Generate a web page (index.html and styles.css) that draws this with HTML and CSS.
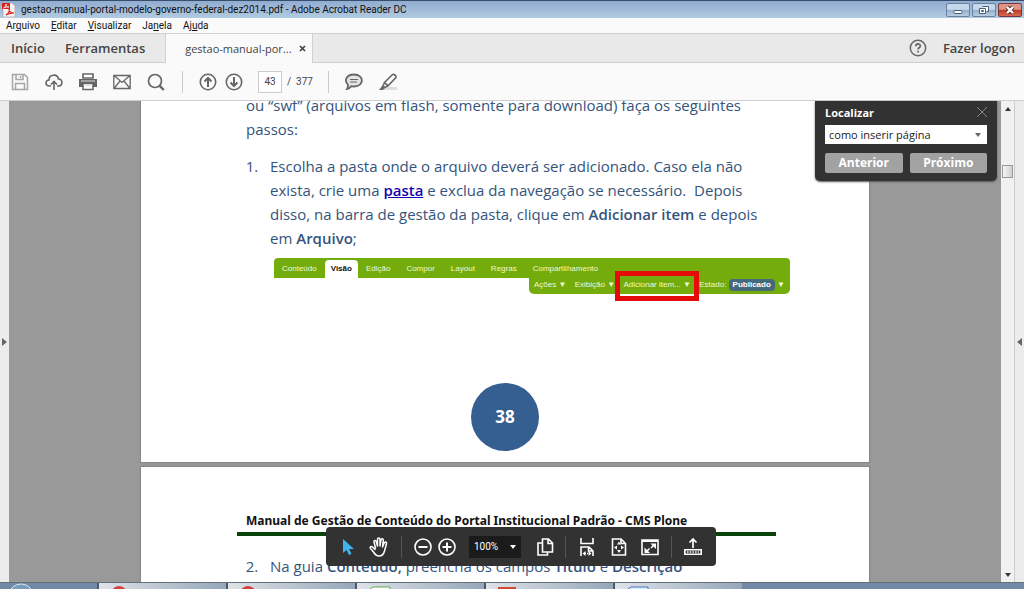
FILE: index.html
```html
<!DOCTYPE html>
<html lang="pt-BR">
<head>
<meta charset="utf-8">
<title>gestao-manual-portal-modelo-governo-federal-dez2014.pdf - Adobe Acrobat Reader DC</title>
<link rel="stylesheet" href="styles.css">
</head>
<body>
<header class="titlebar">
  <svg class="app-icon" width="14" height="14" viewBox="0 0 14 14"><path d="M1 0h9l3 3v11H1z" fill="#f6f3f3" stroke="#b9a5a5" stroke-width=".7"/><path d="M0 0h8v6H0z" fill="#d9231c"/><path d="M1.500 5c2-1 3-3 2.500-4 0 2 1 3 3 3-2 0-4 0-5.500 1z" fill="none" stroke="#fff" stroke-width=".8"/><path d="M4 12c3-2 4-5 3-6 0 3 2 4 5 4-3 0-6 1-8 2z" fill="none" stroke="#d9231c" stroke-width="1.200"/></svg>
  <h1 class="window-title">gestao-manual-portal-modelo-governo-federal-dez2014.pdf - Adobe Acrobat Reader DC</h1>
  <div class="window-buttons">
    <button class="win-btn" aria-label="Minimizar"><svg width="12" height="10" viewBox="0 0 12 10"><rect x="2" y="5.500" width="8" height="3" rx="1" fill="#fff" stroke="#4b5f78"/></svg></button>
    <button class="win-btn" aria-label="Restaurar"><svg width="12" height="10" viewBox="0 0 12 10"><path d="M4.500 1.500h6v5h-2M1.500 3.500h6v5h-6z" fill="#fff" stroke="#4b5f78"/><path d="M3.500 5.500h2v1h-2z" fill="none" stroke="#4b5f78"/></svg></button>
    <button class="win-btn win-close" aria-label="Fechar"><svg width="12" height="10" viewBox="0 0 12 10"><path d="M3 2l6 6M9 2L3 8" stroke="#5a2525" stroke-width="4"/><path d="M3 2l6 6M9 2L3 8" stroke="#fff" stroke-width="2.400"/></svg></button>
  </div>
</header>
<nav class="menubar">
  <button>Ar<u>q</u>uivo</button>
  <button><u>E</u>ditar</button>
  <button><u>V</u>isualizar</button>
  <button>Ja<u>n</u>ela</button>
  <button>Aj<u>u</u>da</button>
</nav>
<nav class="tabs">
  <div class="tab-group">
    <button class="tab-main">Início</button>
    <button class="tab-main">Ferramentas</button>
  </div>
  <div class="tab-doc"><span>gestao-manual-por...</span><button aria-label="Fechar guia"><svg width="7" height="7" viewBox="0 0 7 7"><path d="M1 1l5 5M6 1L1 6" stroke="#444" stroke-width="1.700"/></svg></button></div>
  <div class="account">
    <button aria-label="Ajuda"><svg width="18" height="18" viewBox="0 0 18 18" fill="none" stroke="#666" stroke-width="1.500"><circle cx="9" cy="9" r="7.700"/><path d="M6.800 7.200c0-3 4.500-3 4.500-.3 0 1.700-2.200 1.600-2.200 3.600M9.100 11.700v1.700" stroke-width="1.700"/></svg></button>
    <button class="tab-main">Fazer logon</button>
  </div>
</nav>
<div class="toolbar">
  <div class="tool-group files">
    <button aria-label="Salvar"><svg width="18" height="18" viewBox="0 0 18 18" fill="none" stroke="#a6a6a6" stroke-width="1.500"><path d="M1.500 1.500h12l3 3v12h-15zM5 1.500v5h7v-5M4.500 16.500v-6h9v6M9.500 3v2"/></svg></button>
    <button aria-label="Enviar para a nuvem"><svg width="18" height="18" viewBox="0 0 18 18" fill="none" stroke="#666" stroke-width="1.600"><path d="M6 13H4.500C-.2 13 0 7 4 7c0-6 8.500-6.500 9.500-1 4.500.2 4.500 7 0 7H12M9 17V8.500M6 11.500l3-3 3 3"/></svg></button>
    <button aria-label="Imprimir"><svg width="18" height="18" viewBox="0 0 18 18"><path d="M4 1h10v4H4z" fill="#fff" stroke="#666" stroke-width="1.600"/><path d="M0 6h18v8H0z" fill="#666"/><path d="M4 10.500h10v6H4z" fill="#fff" stroke="#666" stroke-width="1.500"/><path d="M2 8h14M6 13h6" stroke="#ddd"/></svg></button>
    <button aria-label="E-mail"><svg width="18" height="18" viewBox="0 0 18 18" fill="none" stroke="#666" stroke-width="1.300"><path d="M.8 2.500h16.400v13H.8zM1 2.500l8 7 8-7M1 15.500l6-7.500M17 15.500L11 8"/></svg></button>
    <button aria-label="Localizar"><svg width="18" height="18" viewBox="0 0 18 18" fill="none" stroke="#666" stroke-width="1.700"><circle cx="8" cy="8" r="6.500"/><path d="M12.500 12.700l4.300 4.300" stroke-width="2.400"/></svg></button>
  </div>
  <div class="tool-group paging">
    <button aria-label="Página anterior"><svg width="18" height="18" viewBox="0 0 18 18" fill="none" stroke="#666" stroke-width="1.600"><circle cx="9" cy="9" r="7.700"/><path d="M9 14V5M5.500 8.500L9 5l3.500 3.500" stroke-width="2"/></svg></button>
    <button aria-label="Próxima página"><svg width="18" height="18" viewBox="0 0 18 18" fill="none" stroke="#666" stroke-width="1.600"><circle cx="9" cy="9" r="7.700"/><path d="M9 4v9M5.500 9.500L9 13l3.500-3.500" stroke-width="2"/></svg></button>
    <label class="page-field"><input type="text" value="43" aria-label="Número da página"><span>/&nbsp; 377</span></label>
  </div>
  <div class="tool-group notes">
    <button aria-label="Comentar"><svg width="18" height="18" viewBox="0 0 18 18" fill="#e4e4e4" stroke="#666" stroke-width="1.800"><path d="M9 1.500c10.500 0 10.500 12 0 12-1 0-2 0-2.500-.3C5 15 3.500 16 2 16c1-1.500 1-2.500 1-4.300C-1 8 1 1.500 9 1.500z"/><path d="M5 6.500h8M5 9h7" stroke-width="1"/></svg></button>
    <button aria-label="Realçar"><svg width="18" height="18" viewBox="0 0 18 18" fill="none" stroke="#666" stroke-width="1.600"><path d="M6 14h12v3H5z" fill="#ddd" stroke="none"/><path d="M5.500 9.500l7.500-7.500c1.500-1.500 5 .5 3.500 3L9 12.800zM5.500 9.500l-1.500 3.500 1.500 1.500L9 12.800"/><path d="M3.500 12.500l2.500 2.500-2 2H0z" fill="#666" stroke="none"/></svg></button>
  </div>
</div>
<main class="viewer">
  <button class="rail" aria-label="Abrir painel esquerdo"><svg width="5" height="8" viewBox="0 0 5 8"><path d="M0 0l5 4-5 4z" fill="#666"/></svg></button>
  <div class="canvas">
    <article class="page page-first">
      <p>ou “swf” (arquivos em flash, somente para download) faça os seguintes<br>passos:</p>
      <ol class="steps">
        <li>Escolha a pasta onde o arquivo deverá ser adicionado. Caso ela não<br>exista, crie uma <a href="#pasta">pasta</a> e exclua da navegação se necessário.&nbsp; Depois<br>disso, na barra de gestão da pasta, clique em <b>Adicionar item</b> e depois<br>em <b>Arquivo</b>;</li>
      </ol>
      <div class="plone">
        <div class="plone-views"><button>Conteúdo</button><button class="active">Visão</button><button>Edição</button><button>Compor</button><button>Layout</button><button>Regras</button><button>Compartilhamento</button></div>
        <div class="plone-actions"><button>Ações ▼</button><button>Exibição ▼</button><button class="marked">Adicionar item... ▼</button><span class="state">Estado: <button class="pill">Publicado</button> ▼</span></div>
      </div>
      <div class="page-number">38</div>
    </article>
    <article class="page page-next">
      <h2>Manual de Gestão de Conteúdo do Portal Institucional Padrão - CMS Plone</h2>
      <ol class="steps" start="2">
        <li>Na guia <b>Conteúdo,</b> preencha os campos <b>Título</b> e <b>Descrição</b></li>
      </ol>
    </article>
  </div>
  <div class="scrollbar">
    <button aria-label="Rolar para cima"><svg width="6" height="4" viewBox="0 0 6 4"><path d="M3 0l3 4H0z" fill="#333"/></svg></button>
    <div class="track"><div class="thumb"></div></div>
    <button aria-label="Rolar para baixo"><svg width="6" height="4" viewBox="0 0 6 4"><path d="M3 4l3-4H0z" fill="#333"/></svg></button>
  </div>
  <button class="rail rail-right" aria-label="Abrir painel direito"><svg width="5" height="8" viewBox="0 0 5 8"><path d="M5 0L0 4l5 4z" fill="#666"/></svg></button>

  <form class="find">
    <div class="find-head"><label for="find-text">Localizar</label><button type="button" aria-label="Fechar"><svg width="10" height="10" viewBox="0 0 10 10"><path d="M0 0l10 10M10 0L0 10" stroke="#888"/></svg></button></div>
    <div class="find-box"><input id="find-text" type="text" value="como inserir página"><button type="button" aria-label="Opções de busca"><svg width="6" height="4" viewBox="0 0 6 4"><path d="M3 4l3-4H0z" fill="#666"/></svg></button></div>
    <div class="find-actions"><button type="button">Anterior</button><button type="button">Próximo</button></div>
  </form>

  <div class="hud">
    <button aria-label="Selecionar"><svg width="20" height="20" viewBox="0 0 20 20"><path d="M5 2v14l3.500-3 2.500 5 2.500-1-2.300-5H16z" fill="#3cb4ec"/></svg></button>
    <button class="hand" aria-label="Mão"><svg width="20" height="20" viewBox="0 0 20 20" fill="none" stroke="#fff" stroke-width="1.500" stroke-linecap="round" stroke-linejoin="round"><path d="M6.500 11L5 5c-.4-2 1.800-2 2.200-.5L8.500 9V2.500c0-2 2.500-2 2.500 0V9l1-6c.4-2 2.500-1.500 2.300.3L13.500 10l1.700-4c.8-1.800 2.800-1 2.300.8L15.500 14c-1 4-3 5-5.500 5s-4-1.500-5.500-4L1.500 11.500c-1-1.700 1-2.500 2-1.500L6 12.500"/></svg></button>
    <i class="split"></i>
    <button class="zoom-out" aria-label="Reduzir"><svg width="20" height="20" viewBox="0 0 20 20" fill="none" stroke="#fff" stroke-width="1.600"><circle cx="10" cy="10" r="8"/><path d="M5.500 10h9" stroke-width="2"/></svg></button>
    <button class="zoom-in" aria-label="Ampliar"><svg width="20" height="20" viewBox="0 0 20 20" fill="none" stroke="#fff" stroke-width="1.600"><circle cx="10" cy="10" r="8"/><path d="M5.500 10h9M10 5.500v9" stroke-width="2"/></svg></button>
    <button class="zoom-level">100% <svg width="6" height="4" viewBox="0 0 6 4"><path d="M0 0h6L3 4z" fill="#fff"/></svg></button>
    <button class="copy" aria-label="Miniaturas"><svg width="20" height="20" viewBox="0 0 20 20" fill="none" stroke="#fff" stroke-width="1.600"><path d="M7.500 2h6l4 4v9h-10zM13 2v4.500h4.500M7.500 6H3v12h9.500v-3"/></svg></button>
    <i class="split"></i>
    <button aria-label="Ajustar largura"><svg width="20" height="20" viewBox="0 0 20 20" fill="none" stroke="#fff" stroke-width="1.600"><path d="M4 1v5.500h12V1M4 19v-9h8l4 4v5M11.500 10v4H16"/><path d="M8 16.500h4" stroke-dasharray="1 1"/><path d="M8.500 14v5L5.500 16.500zM11.500 14v5l3-2.500z" fill="#fff" stroke="none"/></svg></button>
    <button class="fit" aria-label="Ajustar página"><svg width="20" height="20" viewBox="0 0 20 20" fill="none" stroke="#fff" stroke-width="1.600"><path d="M3.500 2H12l4.500 4.500V18h-13zM12 2v4.500h4.500"/><path d="M10 4.500l2 3H8zM10 16l2-3H8zM5 10.500l3-2v4zM15 10.500l-3-2v4z" fill="#fff" stroke="none"/></svg></button>
    <button class="full" aria-label="Tela cheia"><svg width="20" height="20" viewBox="0 0 20 20"><path d="M2 3h16v14.500H2z" fill="none" stroke="#fff" stroke-width="1.600"/><path d="M2 3h16v2H2zM10.500 6.500H16V12zM4.500 10.500V16H10z" fill="#fff"/><path d="M14 8l-3 3M6.500 14.500l3-3" stroke="#fff" stroke-width="1.600"/></svg></button>
    <i class="split"></i>
    <button aria-label="Compartilhar"><svg width="20" height="20" viewBox="0 0 20 20" fill="none" stroke="#fff"><path d="M10 11V2.500M6.500 5.500l3.500-3.500 3.500 3.500" stroke-width="1.700"/><path d="M1.800 12.800h16.400v4.400H1.800z" stroke-width="1.600"/><path d="M4 15h12" stroke-width="1.500" stroke-dasharray="1.500 1.200"/></svg></button>
  </div>
</main>
<footer class="taskbar">
  <svg class="orb" width="24" height="6" viewBox="0 0 24 6"><ellipse cx="12" cy="10" rx="11" ry="9" fill="#789dbb" stroke="#d7e7f0"/></svg>
  <div class="task"><svg width="16" height="3"><ellipse cx="8" cy="6" rx="7" ry="6" fill="#d3423c"/></svg></div>
  <div class="task"><svg width="16" height="3"><ellipse cx="8" cy="6" rx="7" ry="6" fill="#d3423c"/></svg></div>
  <div class="task"><svg width="22" height="3"><path d="M1 6V3l3-2h17v5" fill="#fff" stroke="#61a94d"/></svg></div>
  <div class="task"><svg width="18" height="3"><path d="M0 1h18v4H0z" fill="#d14a35"/></svg></div>
  <div class="task"><svg width="22" height="3"><path d="M1 6V3l3-2h17v5" fill="#dcecff" stroke="#4b78bb"/></svg></div>
</footer>
</body>
</html>
```
FILE: styles.css
```css
* { box-sizing: border-box; }
html, body { height: 100%; }
body {
  margin: 0;
  display: flex;
  flex-direction: column;
  overflow: hidden;
  background: #fafafa;
  color: #111;
  font-family: "Open Sans", "Noto Sans", sans-serif;
  font-size: 11px;
}
button {
  margin: 0;
  padding: 0;
  border: 0;
  background: none;
  color: inherit;
  font: inherit;
  white-space: nowrap;
}
svg { display: block; flex: none; }
input { min-width: 0; font: inherit; color: inherit; }

.titlebar {
  flex: none;
  display: flex;
  align-items: center;
  gap: 5px;
  height: 18px;
  padding: 0 2px;
  border-top: 1px solid #34506b;
  background: linear-gradient(#91acd0, #b1cbe2);
}
.window-title {
  flex: 1;
  margin: 0;
  font-family: Roboto, sans-serif;
  font-size: 10px;
  font-weight: 400;
  line-height: 16px;
  white-space: nowrap;
}
.window-buttons { display: flex; gap: 2px; }
.win-btn {
  display: flex;
  align-items: center;
  justify-content: center;
  width: 24px;
  height: 14px;
  border: 1px solid #6a809d;
  border-radius: 2px;
  background: linear-gradient(#c5d7ea 45%, #92aeca 50%, #b6cee3);
}
.win-close { border-color: #7b3a3a; background: linear-gradient(#dc9587 45%, #bd3a24 50%, #d86a52); }

.menubar {
  flex: none;
  display: flex;
  gap: 11px;
  height: 15px;
  padding: 0 6px;
  line-height: 15px;
  font-family: Roboto, sans-serif;
  font-size: 10px;
}

.tabs {
  flex: none;
  display: flex;
  height: 30px;
  border-top: 1px solid #d0d0d0;
  background: #e9e9e9;
  color: #444;
}
.tab-group, .account { display: flex; align-items: center; border-bottom: 1px solid #d0d0d0; }
.tab-group { gap: 20px; padding: 0 20px 0 11px; }
.account { flex: 1; justify-content: flex-end; gap: 16px; padding-right: 9px; }
.tab-main { font-size: 13px; font-weight: 600; }
.tab-doc {
  display: flex;
  align-items: center;
  gap: 7px;
  padding: 0 6px 0 19px;
  border: solid #d0d0d0;
  border-width: 0 1px;
  background: #fafafa;
  font-size: 11px;
}

.toolbar {
  flex: none;
  display: flex;
  align-items: center;
  height: 38px;
  border-bottom: 1px solid #cfcfcf;
  color: #444;
}
.tool-group { display: flex; align-items: center; height: 22px; }
.tool-group + .tool-group { border-left: 1px solid #ccc; }
.files { gap: 16px; padding: 0 17px 0 11px; }
.paging { gap: 8px; padding: 0 15px 0 16px; }
.notes { gap: 16px; padding-left: 16px; }
.page-field { display: flex; align-items: center; gap: 5px; margin-left: 7px; font-family: Roboto, sans-serif; font-size: 10px; }
.page-field input {
  width: 24px;
  height: 22px;
  padding: 0;
  border: 1px solid #ccc;
  background: #fff;
  text-align: center;
}

.viewer { position: relative; flex: 1; min-height: 0; display: flex; }
.rail {
  flex: none;
  display: flex;
  align-items: center;
  justify-content: center;
  width: 9px;
  background: #ececec;
}
.rail-right { width: 10px; border-left: 1px solid #ccc; }
.canvas {
  flex: 1;
  display: flex;
  flex-direction: column;
  align-items: center;
  gap: 5px;
  overflow: hidden;
  background: #999;
}
.page {
  flex: none;
  width: 100%;
  max-width: 728px;
  padding: 0 93px 0 105px;
  background: #fff;
  box-shadow: 0 0 1px 1px #888;
  color: #34547d;
  font-size: 15px;
  line-height: 24px;
}
.page p, .steps { margin: 0; white-space: nowrap; }
.page b { font-weight: 600; }
.page-first { margin-top: -8px; padding-bottom: 11px; }
.page-next { padding-top: 43px; padding-bottom: 40px; }
.steps { padding-left: 24px; margin-top: 13px; }
.steps li::marker { content: counter(list-item) ".\a0\a0\a0"; }
.steps a { color: #1504b4; font-weight: 600; }
.page h2 {
  margin: 0 0 0 -9px;
  padding-left: 9px;
  border-bottom: 4px solid #0a430a;
  color: #111;
  font-family: "Noto Sans", "Open Sans", sans-serif;
  font-size: 12px;
  font-weight: 700;
  line-height: 22px;
  white-space: nowrap;
}
.page-next .steps { margin-top: 18px; }
.page-number {
  display: flex;
  align-items: center;
  justify-content: center;
  width: 68px;
  height: 68px;
  margin: 89px auto 0 225px;
  border-radius: 50%;
  background: #365f91;
  color: #fff;
  font-size: 17px;
  font-weight: 700;
}

.plone {
  display: flex;
  flex-direction: column;
  align-items: flex-end;
  width: 516px;
  margin: 8px 0 0 28px;
  color: #eef7d8;
  font-family: "Liberation Sans", Arial, sans-serif;
  font-size: 8px;
  line-height: 16px;
}
.plone-views {
  align-self: stretch;
  display: flex;
  align-items: flex-end;
  height: 20px;
  border-radius: 4px 4px 0 0;
  background: #74ad0b;
}
.plone-views button { height: 18px; padding: 0 8px; }
.plone-views .active { padding: 0 6px; border-radius: 4px 4px 0 0; background: #fff; color: #111; font-weight: 700; }
.plone-actions {
  display: flex;
  align-items: flex-start;
  justify-content: space-between;
  width: 261px;
  height: 16px;
  padding: 0 5px;
  border-radius: 0 0 5px 5px;
  background: #74ad0b;
}
.plone-actions button { line-height: 14px; }
.marked { position: relative; }
.marked::after {
  content: "";
  position: absolute;
  inset: -7px -8px -9px -8px;
  border: 5px solid #e50b0b;
}
.state { line-height: 14px; }
.plone-actions .pill { padding: 0 4px; border-radius: 4px; background: #44697d; color: #fff; font-weight: 700; line-height: 12px; }

.scrollbar {
  flex: none;
  display: flex;
  flex-direction: column;
  width: 13px;
  background: #f1f1f1;
}
.scrollbar button { display: flex; align-items: center; justify-content: center; height: 15px; }
.track { flex: 1; padding-top: 49px; }
.thumb { height: 13px; margin: 0 1px; border: 1px solid #999; background: linear-gradient(90deg, #f5f5f5, #d0d0d0); }

.find {
  position: absolute;
  top: 0;
  right: 27px;
  width: 182px;
  padding: 3px 10px 8px;
  border-radius: 0 0 5px 5px;
  background: #323232;
  box-shadow: 0 1px 2px #555;
  color: #fff;
}
.find-head { display: flex; align-items: center; justify-content: space-between; height: 16px; font-weight: 700; }
.find-box { display: flex; align-items: center; height: 19px; margin-top: 5px; padding: 0 6px 0 4px; background: #fff; color: #222; }
.find-box input { flex: 1; padding: 0; border: 0; background: none; }
.find-actions { display: flex; gap: 7px; margin-top: 9px; }
.find-actions button { flex: 1; height: 20px; border-radius: 2px; background: #a2a2a2; font-size: 12px; font-weight: 700; line-height: 20px; }

.hud {
  position: absolute;
  left: 326px;
  bottom: 16px;
  display: flex;
  align-items: center;
  height: 39px;
  padding: 0 13px 0 12px;
  border-radius: 4px;
  background: #323232;
  color: #fff;
}
.hand { margin-left: 11px; }
.split { width: 1px; height: 22px; margin: 0 11px; background: #555; }
.hand + .split { margin-left: 12px; }
.copy + .split { margin-left: 10px; }
.zoom-in { margin-left: 4px; }
.zoom-level {
  display: flex;
  align-items: center;
  justify-content: space-between;
  width: 52px;
  height: 22px;
  margin-left: 12px;
  padding: 0 5px;
  background: #1b1b1b;
  font-family: Roboto, sans-serif;
  font-size: 10px;
}
.copy { margin-left: 14px; }
.fit { margin-left: 12px; }
.full { margin-left: 11px; }

.taskbar {
  flex: none;
  display: flex;
  align-items: flex-end;
  height: 7px;
  border-top: 1px solid #666e78;
  background: #7189a4;
}
.orb { margin: 0 64px 0 9px; }
.task {
  width: 129px;
  height: 6px;
  padding: 3px 0 0 12px;
  border-left: 2px solid #4d5968;
  background: linear-gradient(90deg, #dfe3e8, #95a7ba);
}
```
